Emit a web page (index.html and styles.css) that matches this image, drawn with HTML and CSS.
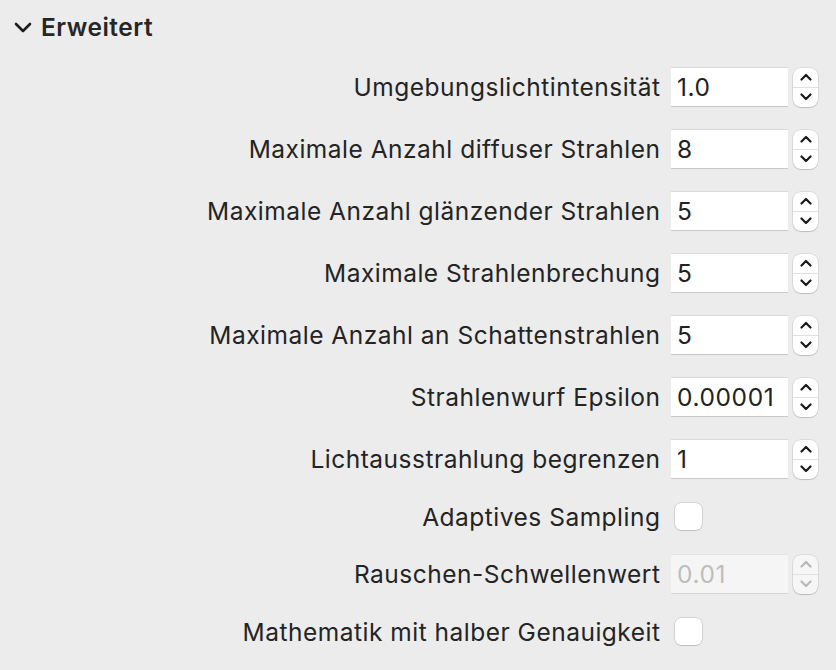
FILE: index.html
```html
<!DOCTYPE html>
<html lang="de">
<head>
    <meta charset="UTF-8">
    <title>Erweitert</title>
    <link rel="stylesheet" href="styles.css">
</head>
<body>
    <div class="section-head">
        <svg class="disclosure" width="18" height="11" viewBox="0 0 18 11"><path d="M2 2 L9 9 L16 2" fill="none" stroke="#1d1d1d" stroke-width="2.6" stroke-linecap="round" stroke-linejoin="round"/></svg>
        <span>Erweitert</span>
    </div>

    <div class="form">
        <label>Umgebungslichtintensität</label>
        <div class="field">
            <div class="num">1.0</div>
            <div class="stepper">
                <span class="up"><svg width="12" height="8" viewBox="0 0 12 8"><path d="M1.5 6.5 L6 2 L10.5 6.5"/></svg></span>
                <span class="down"><svg width="12" height="8" viewBox="0 0 12 8"><path d="M1.5 1.5 L6 6 L10.5 1.5"/></svg></span>
            </div>
        </div>

        <label>Maximale Anzahl diffuser Strahlen</label>
        <div class="field">
            <div class="num">8</div>
            <div class="stepper">
                <span class="up"><svg width="12" height="8" viewBox="0 0 12 8"><path d="M1.5 6.5 L6 2 L10.5 6.5"/></svg></span>
                <span class="down"><svg width="12" height="8" viewBox="0 0 12 8"><path d="M1.5 1.5 L6 6 L10.5 1.5"/></svg></span>
            </div>
        </div>

        <label>Maximale Anzahl glänzender Strahlen</label>
        <div class="field">
            <div class="num">5</div>
            <div class="stepper">
                <span class="up"><svg width="12" height="8" viewBox="0 0 12 8"><path d="M1.5 6.5 L6 2 L10.5 6.5"/></svg></span>
                <span class="down"><svg width="12" height="8" viewBox="0 0 12 8"><path d="M1.5 1.5 L6 6 L10.5 1.5"/></svg></span>
            </div>
        </div>

        <label>Maximale Strahlenbrechung</label>
        <div class="field">
            <div class="num">5</div>
            <div class="stepper">
                <span class="up"><svg width="12" height="8" viewBox="0 0 12 8"><path d="M1.5 6.5 L6 2 L10.5 6.5"/></svg></span>
                <span class="down"><svg width="12" height="8" viewBox="0 0 12 8"><path d="M1.5 1.5 L6 6 L10.5 1.5"/></svg></span>
            </div>
        </div>

        <label>Maximale Anzahl an Schattenstrahlen</label>
        <div class="field">
            <div class="num">5</div>
            <div class="stepper">
                <span class="up"><svg width="12" height="8" viewBox="0 0 12 8"><path d="M1.5 6.5 L6 2 L10.5 6.5"/></svg></span>
                <span class="down"><svg width="12" height="8" viewBox="0 0 12 8"><path d="M1.5 1.5 L6 6 L10.5 1.5"/></svg></span>
            </div>
        </div>

        <label>Strahlenwurf Epsilon</label>
        <div class="field">
            <div class="num">0.00001</div>
            <div class="stepper">
                <span class="up"><svg width="12" height="8" viewBox="0 0 12 8"><path d="M1.5 6.5 L6 2 L10.5 6.5"/></svg></span>
                <span class="down"><svg width="12" height="8" viewBox="0 0 12 8"><path d="M1.5 1.5 L6 6 L10.5 1.5"/></svg></span>
            </div>
        </div>

        <label>Lichtausstrahlung begrenzen</label>
        <div class="field">
            <div class="num">1</div>
            <div class="stepper">
                <span class="up"><svg width="12" height="8" viewBox="0 0 12 8"><path d="M1.5 6.5 L6 2 L10.5 6.5"/></svg></span>
                <span class="down"><svg width="12" height="8" viewBox="0 0 12 8"><path d="M1.5 1.5 L6 6 L10.5 1.5"/></svg></span>
            </div>
        </div>

        <label class="short">Adaptives Sampling</label>
        <div class="field short"><div class="check"></div></div>

        <label>Rauschen-Schwellenwert</label>
        <div class="field disabled">
            <div class="num">0.01</div>
            <div class="stepper">
                <span class="up"><svg width="12" height="8" viewBox="0 0 12 8"><path d="M1.5 6.5 L6 2 L10.5 6.5"/></svg></span>
                <span class="down"><svg width="12" height="8" viewBox="0 0 12 8"><path d="M1.5 1.5 L6 6 L10.5 1.5"/></svg></span>
            </div>
        </div>

        <label class="short">Mathematik mit halber Genauigkeit</label>
        <div class="field short"><div class="check"></div></div>
    </div>
</body>
</html>
```

FILE: styles.css
```css
body {
    margin: 0;
    background: #ececec;
    font-family: Inter, "Noto Sans", sans-serif;
    color: #242424;
    width: 836px;
    height: 670px;
    overflow: hidden;
}

.section-head {
    display: flex;
    align-items: center;
    gap: 9px;
    padding: 12px 0 0 14px;
    height: 30px;
    font-size: 24.5px;
    font-weight: 600;
    letter-spacing: 0.5px;
    color: #262626;
}

.disclosure {
    margin-top: 1px;
}

.form {
    display: grid;
    grid-template-columns: 1fr 147px;
    column-gap: 11px;
    row-gap: 22px;
    align-items: center;
    padding: 25px 18px 0 0;
}

.form label {
    text-align: right;
    font-size: 24.5px;
    letter-spacing: 0.5px;
    margin-right: -0.5px;
    white-space: nowrap;
}

.field {
    display: flex;
    align-items: center;
    gap: 5px;
    height: 40px;
}

.field.short {
    height: 31px;
}

.num {
    box-sizing: border-box;
    width: 117px;
    height: 40px;
    background: #fff;
    border-top: 1px solid #d9d9d9;
    border-bottom: 1px solid #c9c9c9;
    padding: 0 6px;
    display: flex;
    align-items: center;
    font-size: 24.5px;
    letter-spacing: 0.6px;
    color: #222;
}

.stepper {
    box-sizing: border-box;
    width: 25px;
    height: 39px;
    background: #fff;
    border-radius: 8px;
    box-shadow: 0 0 0 0.5px rgba(0, 0, 0, 0.14), 0 1px 1px rgba(0, 0, 0, 0.14);
    display: flex;
    flex-direction: column;
}

.stepper span {
    flex: 1;
    display: flex;
    align-items: center;
    justify-content: center;
}

.stepper .up {
    border-bottom: 1px solid #e0e0e0;
}

.stepper path {
    fill: none;
    stroke: #1a1a1a;
    stroke-width: 2.2;
    stroke-linecap: round;
    stroke-linejoin: round;
}

.disabled .num {
    background: #f5f5f5;
    color: #bdbdbd;
    border-top-color: #e3e3e3;
    border-bottom-color: #d6d6d6;
}

.disabled .stepper {
    background: #f6f6f6;
}

.disabled .stepper path {
    stroke: #b8b8b8;
}

.check {
    box-sizing: border-box;
    width: 27px;
    height: 27px;
    margin-left: 4px;
    background: #fff;
    border-radius: 6px;
    box-shadow: 0 0 0 0.5px rgba(0, 0, 0, 0.2), 0 1px 1px rgba(0, 0, 0, 0.1);
}
```
